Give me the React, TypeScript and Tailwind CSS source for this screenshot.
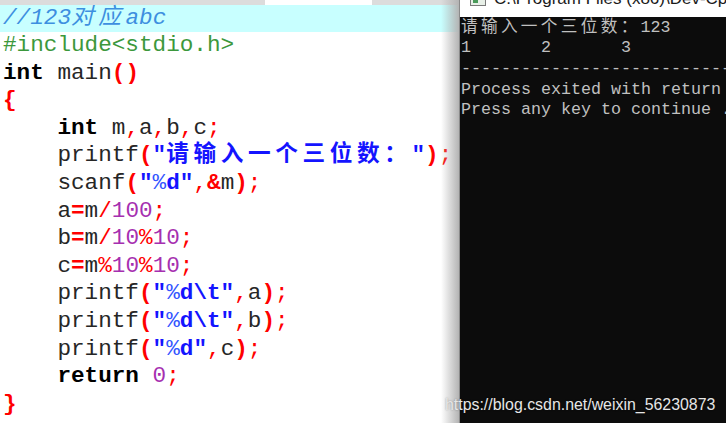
import React from "react";

type Tok = [string, string];

const N = "text-[#262626]";
const K = "font-bold text-black";
const P = "font-bold text-[#ff0000]";
const O = "text-[#ff0000]";
const NUM = "text-[#a62fb0]";
const S = "font-bold text-[#1414ff]";
const SP = "text-[#3355ff]";
const CJK = "font-bold text-[#1414ff] tracking-[4.6px]";

const lines: Tok[][] = [
  [["#include<stdio.h>", "text-[#3c983c]"]],
  [["int", K], [" main", N], ["()", P]],
  [["{", P]],
  [["    ", N], ["int", K], [" m", N], [",", O], ["a", N], [",", O], ["b", N], [",", O], ["c", N], [";", O]],
  [["    printf", N], ["(", P], ["\"", S], ["请输入一个三位数：", CJK], ["\"", S], [")", P], [";", O]],
  [["    scanf", N], ["(", P], ["\"", S], ["%", SP], ["d", S], ["\"", S], [",", O], ["&", P], ["m", N], [")", P], [";", O]],
  [["    a", N], ["=", P], ["m", N], ["/", O], ["100", NUM], [";", O]],
  [["    b", N], ["=", P], ["m", N], ["/", O], ["10", NUM], ["%", O], ["10", NUM], [";", O]],
  [["    c", N], ["=", P], ["m", N], ["%", O], ["10", NUM], ["%", O], ["10", NUM], [";", O]],
  [["    printf", N], ["(", P], ["\"", S], ["%", SP], ["d\\t", S], ["\"", S], [",", O], ["a", N], [")", P], [";", O]],
  [["    printf", N], ["(", P], ["\"", S], ["%", SP], ["d\\t", S], ["\"", S], [",", O], ["b", N], [")", P], [";", O]],
  [["    printf", N], ["(", P], ["\"", S], ["%", SP], ["d", S], ["\"", S], [",", O], ["c", N], [")", P], [";", O]],
  [["    ", N], ["return", K], [" ", N], ["0", NUM], [";", O]],
  [["}", P]],
];

export default function App() {
  return (
    <div className="relative flex h-[423px] w-[726px] overflow-hidden bg-white">
      {/* Editor */}
      <div className="relative flex h-full w-[459px] shrink-0 flex-col bg-white font-['Liberation_Mono','Noto_Sans_CJK_SC',monospace] text-[22.67px]">
        <div className="flex h-[5px] shrink-0">
          <div className="w-[265px] bg-[#dcdcdc]" />
          <div className="w-[107px] bg-white" />
          <div className="flex-1 bg-[#dcdcdc]" />
        </div>
        <div className="flex h-[27px] shrink-0 items-center whitespace-pre bg-[#c8ffff] pl-[3px] leading-[27px]">
          <span className="italic text-[#3d8fe0]">//123</span>
          <span className="italic tracking-[4.6px] text-[#3d8fe0]">对应</span>
          <span className="italic text-[#3d8fe0]">abc</span>
        </div>
        {lines.map((toks, i) => (
          <div key={i} className="flex h-[27.6px] shrink-0 items-center whitespace-pre pl-[3px] leading-[27.6px]">
            {toks.map(([t, c], j) => (
              <span key={j} className={c}>
                {t}
              </span>
            ))}
          </div>
        ))}
        <div className="pointer-events-none absolute right-0 top-0 h-full w-[18px] bg-gradient-to-r from-transparent to-[#b4b4b4]" />
      </div>

      {/* Console */}
      <div className="flex h-full flex-1 flex-col overflow-hidden border-l border-[#8a8a8a] bg-[#0c0c0c]">
        <div className="flex h-[17px] shrink-0 items-start gap-[8px] overflow-hidden bg-white pl-[10px]">
          <div className="-mt-[8px] h-[14px] w-[16px] shrink-0 border border-[#7a7a7a] bg-[#e8f0e8]">
            <div className="ml-[2px] mt-[7px] h-[3px] w-[5px] bg-[#4a9a5a]" />
          </div>
          <div className="-mt-[10px] whitespace-nowrap font-['Liberation_Sans',sans-serif] text-[17px] leading-[17px] text-[#1a1a1a]">
            C:\Program Files (x86)\Dev-Cpp\ConsolePauser.exe
          </div>
        </div>
        <div className="whitespace-pre pl-[1px] pt-[1px] font-['Liberation_Mono','Noto_Sans_CJK_SC',monospace] text-[16.67px] leading-[20.3px] text-[#c0c0c0]">
          <div>
            <span className="tracking-[3.3px]">请输入一个三位数：</span>123
          </div>
          <div>{"1       2       3"}</div>
          <div>{"--------------------------------------------"}</div>
          <div className="mt-[1px]">Process exited with return value 0</div>
          <div>Press any key to continue . . .</div>
        </div>
      </div>

      {/* Watermark */}
      <div className="pointer-events-none absolute left-[445px] top-[393px] whitespace-nowrap font-['Liberation_Sans',sans-serif] text-[15.9px] text-[#e6e6e6] [text-shadow:0_0_2px_rgba(0,0,0,0.35)]">
        https://blog.csdn.net/weixin_56230873
      </div>
    </div>
  );
}
